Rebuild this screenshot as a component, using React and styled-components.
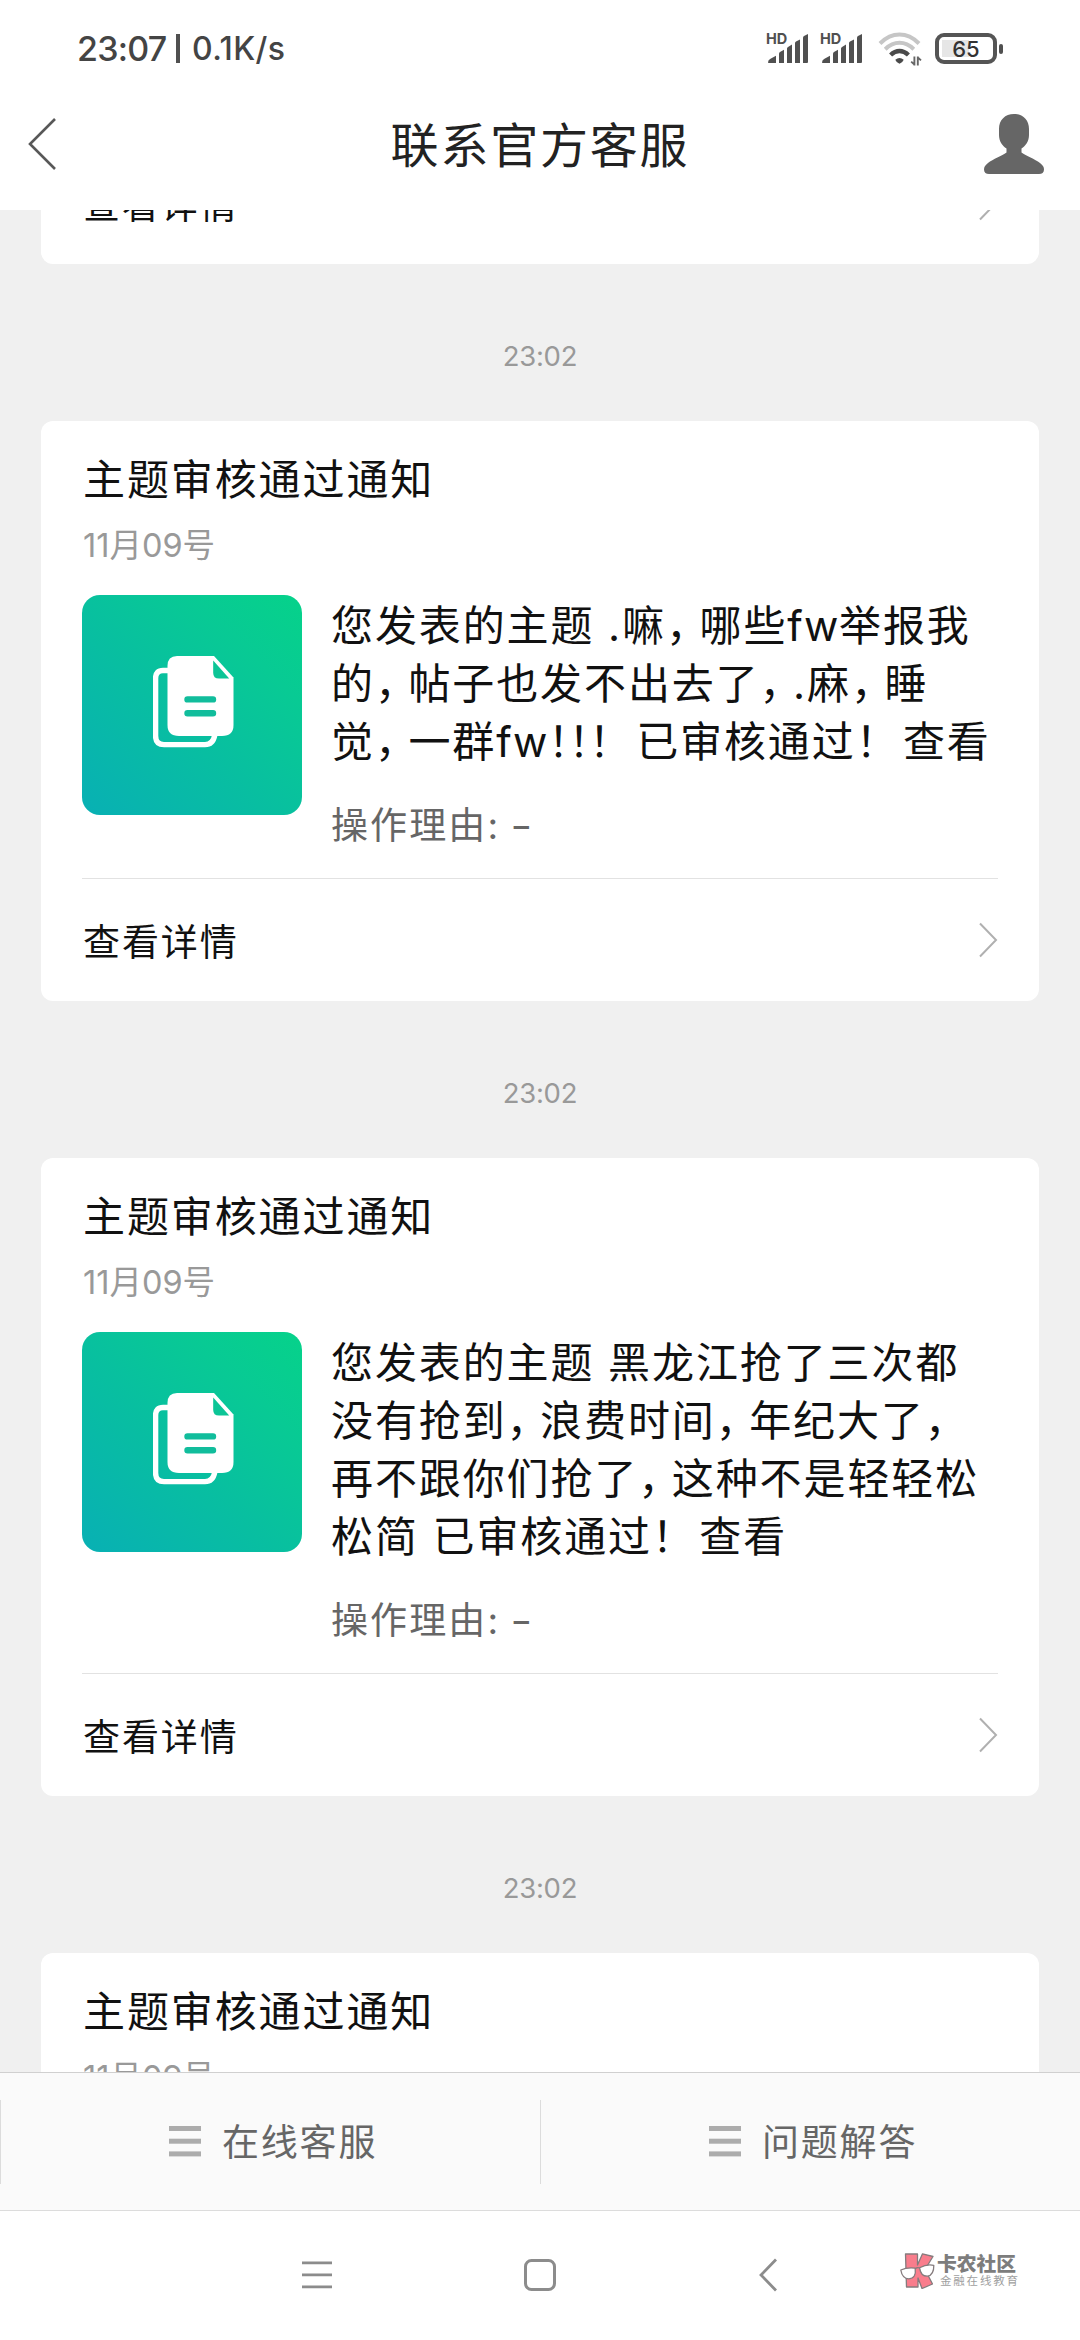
import React from 'react'
import styled, { createGlobalStyle } from 'styled-components'

const messages = [
  {
    id: 1,
    time: '23:02',
    title: '主题审核通过通知',
    date: '11月09号',
    lines: ['您发表的主题 .嘛，哪些fw举报我', '的，帖子也发不出去了，.麻，睡', '觉，一群fw!!！ 已审核通过！ 查看'],
    reason: '操作理由: ',
  },
  {
    id: 2,
    time: '23:02',
    title: '主题审核通过通知',
    date: '11月09号',
    lines: ['您发表的主题 黑龙江抢了三次都', '没有抢到，浪费时间，年纪大了，', '再不跟你们抢了，这种不是轻轻松', '松简 已审核通过！ 查看'],
    reason: '操作理由: ',
  },
  {
    id: 3,
    time: '23:02',
    title: '主题审核通过通知',
    date: '11月09号',
    lines: ['您发表的主题'],
    reason: '操作理由: ',
  },
]

// 标点单独包一层，宽度比汉字窄
const renderLine = (line) =>
  line.split(/([，！!]|fw)/).map((part, i) => {
    if (part === '，' || part === '！') return <Punct key={i} $w={33.5}>{part}</Punct>
    if (part === '!') return <Punct key={i} $w={20.5}>！</Punct>
    if (part === 'fw') return <Latin key={i}>{part}</Latin>
    return part
  })

const Signal = () => (
  <SignalBox>
    <Hd>HD</Hd>
    <svg width='42' height='30' viewBox='0 0 42 30' fill='#505050'>
      <path d='M1 28.6 Q1 26 3.5 24.8 L9 21.8 V29 H1.6 Q1 29 1 28.6Z' />
      <path d='M12 19.5 Q12 18.6 13 18 L17 15.8 V29 H12Z' />
      <path d='M20 14.5 Q20 13.6 21 13 L25 10.6 V29 H20Z' />
      <path d='M28 9 Q28 8 29 7.5 L33 5.4 V29 H28Z' />
      <path d='M36 3.6 Q36 2.6 37 2 L41 0 V28 Q41 29 40 29 H36Z' />
    </svg>
  </SignalBox>
)

const Wifi = () => (
  <svg width='44' height='34' viewBox='0 0 44 34' fill='none'>
    <path d='M2 11.5 Q11 2.6 21.5 2.6 Q32 2.6 41 11.5' stroke='#c6c6c6' strokeWidth='4' />
    <path d='M7.2 17.2 Q13.8 10.8 21.5 10.8 Q29.2 10.8 35.8 17.2' stroke='#c6c6c6' strokeWidth='4' />
    <path d='M12.6 23 Q16.8 19 21.5 19 Q26.2 19 30.4 23' stroke='#4a4a4a' strokeWidth='4.4' />
    <path d='M17.3 27.8 Q21.5 24 25.7 27.8 Q24.5 31 21.5 31.8 Q18.5 31 17.3 27.8Z' fill='#4a4a4a' />
    <path d='M36.4 24.5 V33.5 M36.4 32.5 L33.2 29.6 M39.8 33.5 V24.5 M39.8 25.5 L43 28.4' stroke='#666' strokeWidth='1.9' />
  </svg>
)

const Battery = () => (
  <BatteryBox>
    <BatteryBody>
      <BatteryFill />
      <BatteryText>65</BatteryText>
    </BatteryBody>
    <BatteryTip />
  </BatteryBox>
)

const Arrow = () => (
  <svg width='20' height='36' viewBox='0 0 20 36' fill='none' stroke='#b0b0b0' strokeWidth='2'>
    <path d='M2 1.5 L18 18 L2 34.5' />
  </svg>
)

const PaperIcon = () => (
  <svg width='82' height='92' viewBox='0 0 82 92'>
    <path d='M16 14.5 H10 Q2.6 14.5 2.6 22 V80 Q2.6 88.6 11 88.6 H52 Q60 88.6 61.8 79' fill='none' stroke='#fff' strokeWidth='5.4' />
    <path d='M24 0 H61 L80.5 21.5 V69 Q80.5 80 69 80 H26 Q14.5 80 14.5 69 V10 Q14.5 0 24 0Z' fill='#fff' />
    <path d='M60.2 4.6 L76.2 22.6 H66 Q60.2 22.6 60.2 17Z' fill='#0cc596' />
    <path d='M34.5 43.4 H60 M34.5 57.2 H60' stroke='#11bd9c' strokeWidth='6.4' strokeLinecap='round' />
  </svg>
)

const BarsIcon = () => (
  <svg width='32' height='31' viewBox='0 0 32 31' fill='#acacac'>
    <rect y='0' width='32' height='5' />
    <rect y='12.7' width='32' height='5' />
    <rect y='25.4' width='32' height='5' />
  </svg>
)

const Watermark = () => (
  <Mark>
    <svg width='35' height='36' viewBox='0 0 35 36' stroke='#857b7d' strokeWidth='1.3' strokeLinejoin='round'>
      <path d='M5.5 1 H17.5 V12 L22.5 .8 L33 3.5 L25 16.5 L32.5 31 L22 35.5 L18 25 V34 H6.5Z' fill='#f97d8c' />
      <path d='M.8 17 Q7 14.2 15.2 15.2 Q16.5 25.5 8.8 25.8 Q2.2 25.5 .8 17Z' fill='#fff' />
      <path d='M19.6 14.8 Q27 10.8 33.8 12.4 Q34 21.8 27.5 23.2 Q20.8 23.4 19.6 14.8Z' fill='#fff' />
      <path d='M15.2 15.8 Q17.5 13.8 19.6 15' fill='none' />
    </svg>
    <div>
      <MarkName>卡农社区</MarkName>
      <MarkSub>金融在线教育</MarkSub>
    </div>
  </Mark>
)

const Detail = () => (
  <DetailRow>
    <span>查看详情</span>
    <Arrow />
  </DetailRow>
)

const Message = ({ item }) => (
  <>
    <Time>{item.time}</Time>
    <Card>
      <CardTitle>{item.title}</CardTitle>
      <CardDate>{item.date}</CardDate>
      <Content>
        <Thumb>
          <PaperIcon />
        </Thumb>
        <div>
          {item.lines.map((line) => (
            <Line key={line}>{renderLine(line)}</Line>
          ))}
          <Reason>
            {item.reason}
            <Dash>-</Dash>
          </Reason>
        </div>
      </Content>
      <Detail />
    </Card>
  </>
)

const App = () => {
  return (
    <Page>
      <GlobalStyle />
      <StatusBar>
        <Clock>23:07</Clock>
        <Split />
        <Speed>0.1K/s</Speed>
        <StatusIcons>
          <Signal />
          <Signal />
          <Wifi />
          <Battery />
        </StatusIcons>
      </StatusBar>
      <Header>
        <svg width='28' height='52' viewBox='0 0 28 52' fill='none' stroke='#585858' strokeWidth='2.6'>
          <path d='M27 1 L2 26 L27 51' />
        </svg>
        <HeaderTitle>联系官方客服</HeaderTitle>
        <svg width='60' height='60' viewBox='0 0 60 60' fill='#666'>
          <path d='M30 0 C39 0 45 6 45 15 V21 C45 27.5 41.5 32 37.5 34.5 V38.5 C42 42 51 45 56 49 C59 51.3 60 53 60 55.5 C60 58.5 58 60 55 60 H5 C2 60 0 58.5 0 55.5 C0 53 1 51.3 4 49 C9 45 18 42 22.5 38.5 V34.5 C18.5 32 15 27.5 15 21 V15 C15 6 21 0 30 0Z' />
        </svg>
      </Header>
      <Chat>
        <Card $scrolled>
          <Detail />
        </Card>
        {messages.map((item) => (
          <Message key={item.id} item={item} />
        ))}
      </Chat>
      <Tabs>
        <Tab>
          <BarsIcon />
          <TabText>在线客服</TabText>
        </Tab>
        <Tab>
          <BarsIcon />
          <TabText>问题解答</TabText>
        </Tab>
      </Tabs>
      <NavBar>
        <svg width='30' height='28' viewBox='0 0 30 28' stroke='#8c8c8c' strokeWidth='2.8'>
          <path d='M0 1.8 H30 M0 13.8 H30 M0 25.8 H30' />
        </svg>
        <svg width='32' height='32' viewBox='0 0 32 32' fill='none' stroke='#8c8c8c' strokeWidth='3'>
          <rect x='1.5' y='1.5' width='29' height='29' rx='6' />
        </svg>
        <svg width='18' height='34' viewBox='0 0 18 34' fill='none' stroke='#8c8c8c' strokeWidth='2.8'>
          <path d='M17 1.5 L2 17 L17 32.5' />
        </svg>
        <Watermark />
      </NavBar>
    </Page>
  )
}

export default App

const GlobalStyle = createGlobalStyle`
  * {
    box-sizing: border-box;
  }
  body {
    margin: 0;
    background: #fff;
    font-family: Inter, 'Noto Sans CJK SC', sans-serif;
  }
  svg {
    display: block;
    flex-shrink: 0;
  }
`

const Page = styled.div`
  position: relative;
  display: flex;
  flex-direction: column;
  width: 1080px;
  height: 2340px;
  overflow: hidden;
  background: #fff;
`

const StatusBar = styled.div`
  display: flex;
  align-items: center;
  height: 97px;
  padding: 0 77px 0 77px;
  color: #444;
  line-height: 1;
`

const Clock = styled.span`
  width: 99px;
  font-size: 34px;
  font-weight: 500;
  letter-spacing: -0.8px;
`

const Split = styled.i`
  width: 4px;
  height: 29px;
  margin-right: 12px;
  background: #505050;
`

const Speed = styled.span`
  font-size: 32px;
  font-weight: 500;
  letter-spacing: 0.4px;
`

const StatusIcons = styled.div`
  display: flex;
  align-items: center;
  margin-left: auto;
`

const SignalBox = styled.div`
  position: relative;
  left: -3px;
  width: 42px;
  margin-right: 12px;
`

const Hd = styled.span`
  position: absolute;
  left: -1px;
  top: -2px;
  font-size: 14.5px;
  font-weight: 700;
  color: #505050;
`

const BatteryBox = styled.div`
  display: flex;
  align-items: center;
  margin-left: 13px;
`

const BatteryBody = styled.div`
  position: relative;
  display: flex;
  align-items: center;
  justify-content: center;
  width: 62px;
  height: 31px;
  border: 4px solid #555;
  border-radius: 9px;
`

const BatteryFill = styled.i`
  position: absolute;
  left: 3px;
  top: 3px;
  width: 27px;
  height: 17px;
  background: #e6e6e6;
`

const BatteryText = styled.span`
  position: relative;
  font-size: 22px;
  font-weight: 500;
  color: #333;
`

const BatteryTip = styled.i`
  width: 4px;
  height: 10px;
  margin-left: 2px;
  border-radius: 2px;
  background: #505050;
`

const Header = styled.header`
  display: flex;
  align-items: center;
  justify-content: space-between;
  height: 113px;
  padding: 0 36px 20px 28px;
`

const HeaderTitle = styled.h1`
  margin: 4px 0 0 40px;
  font-size: 48px;
  font-weight: 400;
  line-height: 60px;
  letter-spacing: 1.8px;
  color: #222;
`

const Chat = styled.main`
  height: 1862px;
  padding: 0 41px;
  overflow: hidden;
  background: #f0f0f0;
`

const Card = styled.section`
  margin-top: ${(props) => (props.$scrolled ? '-69px' : '0')};
  padding: 0 41px;
  border-radius: 12px;
  background: #fff;
`

const Time = styled.div`
  height: 157px;
  padding-top: 2px;
  font-size: 27.5px;
  line-height: 180px;
  letter-spacing: -0.3px;
  text-align: center;
  color: #999;
`

const CardTitle = styled.h2`
  margin: 0;
  padding: 30px 0 0 1px;
  font-size: 42px;
  font-weight: 400;
  line-height: 58px;
  letter-spacing: 1.9px;
  color: #111;
`

const CardDate = styled.div`
  height: 86px;
  padding: 17px 0 0 1px;
  font-size: 32.5px;
  line-height: 40px;
  color: #999;
`

const Content = styled.div`
  display: flex;
  padding-bottom: 24px;
`

const Thumb = styled.div`
  display: flex;
  flex-shrink: 0;
  width: 220px;
  height: 220px;
  margin-right: 29px;
  padding: 61px 0 0 71px;
  border-radius: 18px;
  background: linear-gradient(45deg, #08b0b4 0%, #08bfa0 45%, #08ca94 75%, #06d28a 100%);
`

const Line = styled.div`
  height: 58px;
  font-size: 42px;
  line-height: 62px;
  letter-spacing: 1.9px;
  white-space: pre;
  color: #111;
`

const Punct = styled.span`
  display: inline-block;
  width: ${(props) => props.$w}px;
  letter-spacing: -2px;
  font-feature-settings: 'halt';
`

const Latin = styled.span`
  letter-spacing: 0.6px;
`

const Reason = styled.div`
  height: 85px;
  padding-top: 30px;
  font-size: 37px;
  line-height: 54px;
  letter-spacing: 2.1px;
  white-space: pre;
  color: #666;
`

const Dash = styled.span`
  display: inline-block;
  transform: scaleX(1.3);
`

const DetailRow = styled.div`
  display: flex;
  align-items: center;
  justify-content: space-between;
  height: 123px;
  padding: 0 0 0 1px;
  border-top: 1px solid #e2e2e2;
  font-size: 37px;
  letter-spacing: 1.9px;
  color: #111;
`

const Tabs = styled.div`
  display: flex;
  align-items: center;
  height: 139px;
  border-top: 1px solid #d0d0d0;
  border-bottom: 1px solid #dcdcdc;
  background: #fafafa;
`

const Tab = styled.div`
  display: flex;
  flex: 1;
  align-items: center;
  gap: 21px;
  height: 84px;
  padding-left: 168px;
  border-left: 1px solid #dcdcdc;
`

const TabText = styled.span`
  padding-top: 2px;
  font-size: 37px;
  line-height: 56px;
  letter-spacing: 1.8px;
  color: #666;
`

const NavBar = styled.nav`
  display: grid;
  grid-template-columns: 222px 235px 1fr;
  align-items: center;
  height: 129px;
  padding: 0 0 1px 302px;
`

const Mark = styled.div`
  position: absolute;
  left: 900px;
  top: 2253px;
  display: flex;
  gap: 2px;
`

const MarkName = styled.div`
  padding-top: 1px;
  font-size: 19.8px;
  font-weight: 900;
  line-height: 21px;
  color: #7d7d7d;
`

const MarkSub = styled.div`
  padding-left: 3px;
  font-size: 11.5px;
  line-height: 13px;
  letter-spacing: 1.8px;
  color: #a0a0a0;
`
